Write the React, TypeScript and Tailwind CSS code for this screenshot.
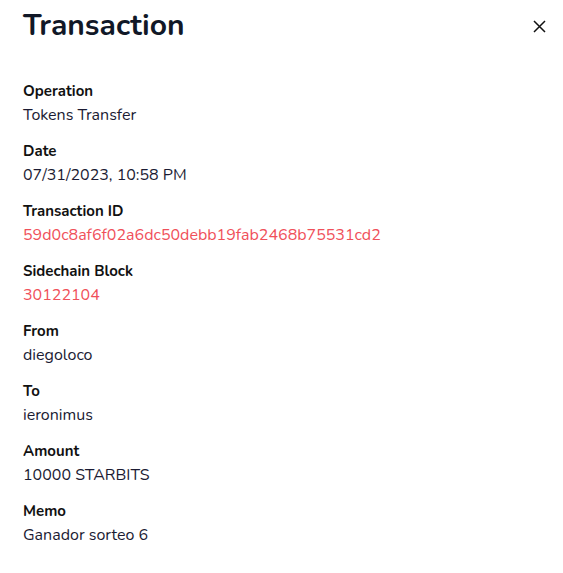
import React from 'react';

const rows: { label: string; value: string; link?: boolean }[] = [
  { label: 'Operation', value: 'Tokens Transfer' },
  { label: 'Date', value: '07/31/2023, 10:58 PM' },
  { label: 'Transaction ID', value: '59d0c8af6f02a6dc50debb19fab2468b75531cd2', link: true },
  { label: 'Sidechain Block', value: '30122104', link: true },
  { label: 'From', value: 'diegoloco' },
  { label: 'To', value: 'ieronimus' },
  { label: 'Amount', value: '10000 STARBITS' },
  { label: 'Memo', value: 'Ganador sorteo 6' },
];

export default function App() {
  return (
    <div className="w-[563px] h-[573px] bg-white font-['Nunito','Lato',sans-serif] text-[#1b1b33]">
      <div className="flex items-center justify-between pl-[23px] pr-[16px] pt-2">
        <h1 className="text-[30px] leading-9 font-bold text-[#111827]">Transaction</h1>
        <button className="w-4 h-4 flex items-center justify-center text-[#111]">
          <svg width="13" height="13" viewBox="0 0 13 13" fill="none" stroke="currentColor" strokeWidth="1.5">
            <path d="M1 1L12 12M12 1L1 12" />
          </svg>
        </button>
      </div>
      <div className="flex flex-col gap-3 pl-[23px] mt-[35px]">
        {rows.map((r) => (
          <div key={r.label} className="flex flex-col">
            <div className="text-[15px] leading-6 font-bold text-[#111]">{r.label}</div>
            <div className={`text-[16px] leading-6 ${r.link ? 'text-[#f0505a]' : 'text-[#1b1b33]'}`}>{r.value}</div>
          </div>
        ))}
      </div>
    </div>
  );
}
